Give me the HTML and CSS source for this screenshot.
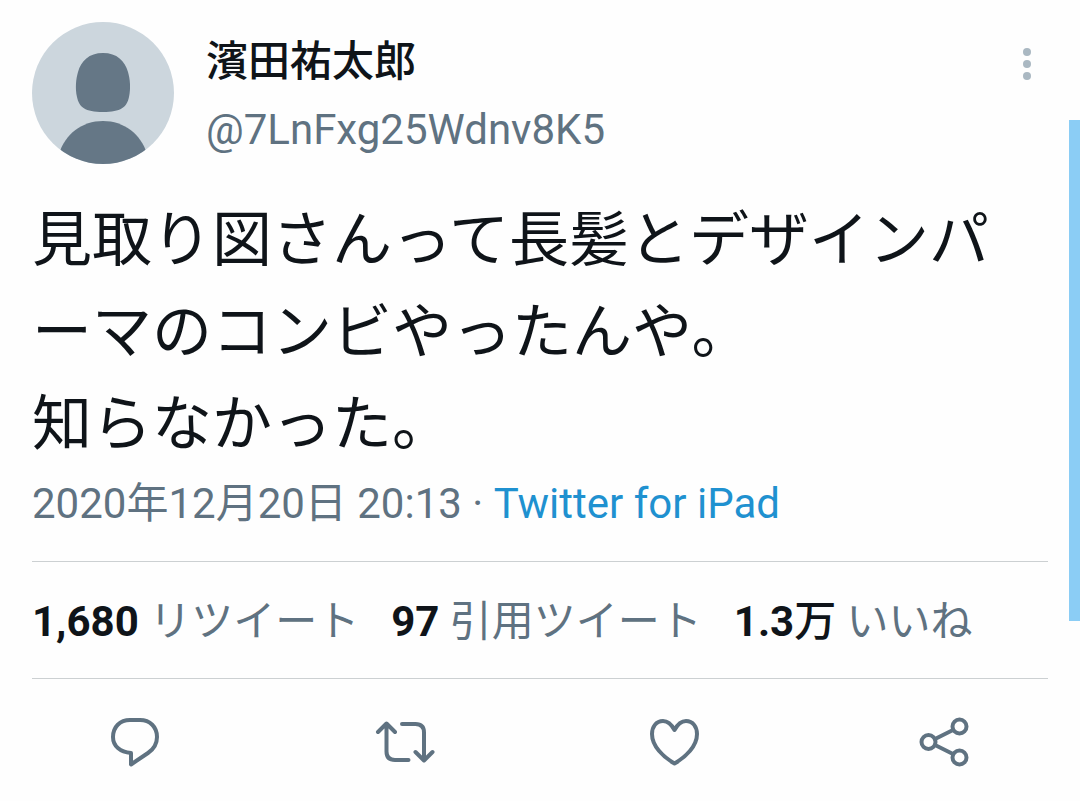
FILE: index.html
```html
<!DOCTYPE html>
<html lang="ja">
<head>
  <meta charset="UTF-8" />
  <meta name="viewport" content="width=device-width, initial-scale=1.0" />
  <title>濱田祐太郎 - ツイート</title>
  <link rel="stylesheet" href="styles.css">
</head>
<body>
  <article class="tweet">
    <header class="tweet-header">
      <svg class="avatar" viewBox="0 0 142 142" role="img" aria-label="プロフィール画像">
        <clipPath id="avatarClip"><circle cx="71" cy="71" r="71" /></clipPath>
        <g clip-path="url(#avatarClip)">
          <rect width="142" height="142" fill="#ccd6dd" />
          <path fill="#657786" d="M71 31c14 0 22 8 25 19 2 7 3 16 1 25-2 10-8 15-26 15s-24-5-26-15c-2-9-1-18 1-25 3-11 11-19 25-19z" />
          <path fill="#657786" d="M27 132c6-20 23-33 44-33s38 13 44 33v10H27z" />
        </g>
      </svg>
      <div class="user">
        <div class="name">濱田祐太郎</div>
        <div class="handle">@7LnFxg25Wdnv8K5</div>
      </div>
      <button class="menu-btn" type="button" aria-label="もっと見る">
        <svg width="8" height="34" viewBox="0 0 8 34" fill="#aab8c2">
          <circle cx="4" cy="5" r="4" />
          <circle cx="4" cy="17" r="4" />
          <circle cx="4" cy="29" r="4" />
        </svg>
      </button>
    </header>

    <p class="tweet-text">見取り図さんって長髪とデザインパーマのコンビやったんや。<br>知らなかった。</p>

    <div class="meta">2020年12月20日 20:13 · <a href="#">Twitter for iPad</a></div>

    <div class="stats">
      <div><strong>1,680</strong> リツイート</div>
      <div><strong>97</strong> 引用ツイート</div>
      <div><strong>1.3<span class="unit">万</span></strong> いいね</div>
    </div>
  </article>

  <div class="actions">
    <button type="button" aria-label="返信">
      <svg viewBox="0 0 60 60">
        <path d="M25 8h10c10 0 17 7 17 17 0 7-3 12-9 16L26 52.500V41C15 40 8 34 8 25 8 15 15 8 25 8z" />
      </svg>
    </button>
    <button type="button" aria-label="リツイート">
      <svg viewBox="0 0 60 60">
        <path d="M3 20l8.500-8.500L20 20M11.500 12v27.500q0 8.500 8.500 8.500h13.500M27 12h13.500q8.500 0 8.500 8.500V48M40.500 40l8.500 8.500 8.500-8.500" />
      </svg>
    </button>
    <button type="button" aria-label="いいね">
      <svg viewBox="0 0 60 60">
        <path d="M29.500 18C26 11.500 22 9 18 9 11 9 7 15 7 22c0 12 11 23 22.500 29.500C41 45 52 34 52 22c0-7-4-13-11-13-4 0-8 2.500-11.500 9z" />
      </svg>
    </button>
    <button type="button" aria-label="共有">
      <svg viewBox="0 0 60 60">
        <circle cx="13.500" cy="30" r="7" />
        <circle cx="44.500" cy="14.500" r="7" />
        <circle cx="44.500" cy="45.500" r="7" />
        <path d="M20 27l18-9M20 33l18 9" />
      </svg>
    </button>
  </div>

  <div class="scroll-thumb"></div>
</body>
</html>
```
FILE: styles.css
```css
:root {
  --text-color: #0f1419;
  --muted: #5f7281;
  --link: #1f91d0;
  --line: #ccd0d2;
}
* {
  box-sizing: border-box;
}
body {
  margin: 0;
  font-family: Roboto, "Noto Sans CJK JP", sans-serif;
  font-size: 42px;
  color: var(--text-color);
  background-color: #fefefe;
}
button {
  padding: 0;
  border: none;
  background: none;
  cursor: pointer;
}
.tweet {
  padding: 22px 32px 0;
}
.tweet-header {
  display: flex;
  align-items: flex-start;
}
.avatar {
  width: 142px;
  height: 142px;
  flex: none;
}
.user {
  flex: 1;
  margin-left: 32px;
  padding-top: 6px;
  line-height: 68px;
}
.name {
  font-weight: 500;
}
.handle {
  color: var(--muted);
}
.menu-btn {
  padding: 25px 17px;
  line-height: 0;
}
.tweet-text {
  margin: 31px 0 0;
  font-size: 60px;
  line-height: 92px;
  line-break: anywhere;
}
.meta {
  padding-bottom: 24px;
  line-height: 66px;
  color: var(--muted);
}
.meta a {
  color: var(--link);
  text-decoration: none;
}
.stats {
  display: flex;
  gap: 32px;
  padding-top: 4px;
  line-height: 112px;
  white-space: nowrap;
  color: var(--muted);
  border-top: 1px solid var(--line);
  border-bottom: 1px solid var(--line);
}
.stats strong {
  color: var(--text-color);
  font-weight: 700;
}
.stats .unit {
  font-weight: 500;
}
.actions {
  display: flex;
  padding: 33px 0 20px;
}
.actions button {
  flex: 1;
  line-height: 0;
}
.actions svg {
  width: 60px;
  height: 60px;
  fill: none;
  stroke: var(--muted);
  stroke-width: 4;
  stroke-linecap: round;
  stroke-linejoin: round;
}
/* scroll indicator on the right edge */
.scroll-thumb {
  position: absolute;
  top: 120px;
  right: 0;
  width: 11px;
  height: 501px;
  background-color: #8bcdf5;
}
```
